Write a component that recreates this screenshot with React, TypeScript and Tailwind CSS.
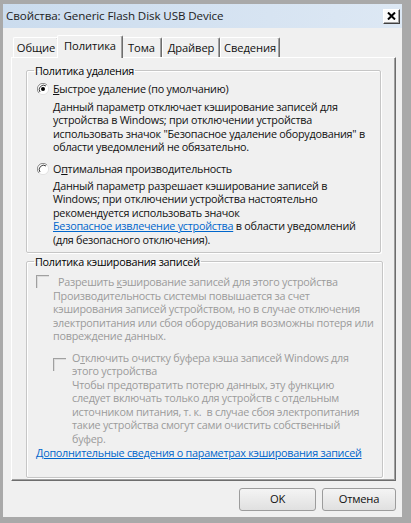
import type { ReactNode } from 'react';

function Radio({ checked }: { checked?: boolean }) {
  return (
    <svg width="12" height="12" viewBox="0 0 12 12" className="shrink-0">
      <circle cx="6" cy="6" r="5.5" fill="#fff" />
      <path d="M10 2 A5.5 5.5 0 0 0 2 10" fill="none" stroke="#8a8a8a" strokeWidth="1" />
      <path d="M9 3 A4.3 4.3 0 0 0 3 9" fill="none" stroke="#3c3c3c" strokeWidth="1" />
      <path d="M2 10 A5.5 5.5 0 0 0 10 2" fill="none" stroke="#e2e2e2" strokeWidth="1" />
      {checked && <circle cx="6" cy="6" r="2" fill="#000" />}
    </svg>
  );
}

function DisabledCheck() {
  return (
    <span className="block w-[13px] h-[13px] shrink-0 bg-[#f0f0f0] border-t border-l border-[#a0a0a0] border-r-white border-b-white shadow-[inset_1px_1px_0_#dcdcdc]" />
  );
}

function GroupBox({ title, children }: { title: string; children: ReactNode }) {
  return (
    <fieldset className="border border-[#c6c6c6] rounded-[2px] shadow-[1px_1px_0_#fff,inset_1px_1px_0_#fff]">
      <legend className="ml-[7px] px-[1px] leading-[13.5px] text-black">{title}</legend>
      {children}
    </fieldset>
  );
}

const tabs = ['Общие', 'Политика', 'Тома', 'Драйвер', 'Сведения'];
const tabW = ['w-[46px]', 'w-[66px]', 'w-[41px]', 'w-[58px]', 'w-[60px]'];

export default function App() {
  return (
    <div className="w-[411px] h-[523px] overflow-hidden whitespace-nowrap bg-[#a9a9a9] pt-[4px] pl-[3px] pr-[9px] pb-[6px] font-['Open_Sans',sans-serif] text-[10.8px] tracking-[-0.25px] text-[#111]">
      <div className="h-full flex flex-col bg-[#f0f0f0]">
        {/* title bar */}
        <div className="h-[24px] flex items-center justify-between pl-[3px] pr-[2px] bg-gradient-to-r from-[#cbdcee] to-[#dde8f4]">
          <span className="text-[11.6px] text-[#222] tracking-[-0.1px]">Свойства: Generic Flash Disk USB Device</span>
          <button className="w-[17px] h-[15px] flex items-center justify-center bg-[#fafafa] border border-[#fff] border-r-[#404040] border-b-[#404040] shadow-[inset_-1px_-1px_0_#a0a0a0]">
            <svg width="9" height="8" viewBox="0 0 9 8">
              <path d="M1 0.5 L8 7.5 M8 0.5 L1 7.5" stroke="#000" strokeWidth="2" />
            </svg>
          </button>
        </div>

        <div className="flex-1 flex flex-col pl-[8px] pr-[6px]">
          {/* tabs */}
          <div className="flex items-end h-[29px] pl-[2px] text-[11.2px] tracking-[-0.1px]">
            {tabs.map((t, i) =>
              i === 1 ? (
                <div
                  key={t}
                  className={tabW[i] + ' -mx-[2px] relative z-10 h-[23px] -mb-[1px] bg-[#f0f0f0] border-t border-l border-white border-r border-r-[#6d6d6d] rounded-t-[2px] shadow-[inset_-1px_0_0_#a0a0a0] flex items-start justify-center pt-[2px]'}
                >
                  {t}
                </div>
              ) : (
                <div
                  key={t}
                  className={tabW[i] + ' h-[20px] border-t border-l border-white border-r border-r-[#6d6d6d] rounded-t-[2px] shadow-[inset_-1px_0_0_#a0a0a0] flex items-start justify-center pt-[2px]'}
                >
                  {t}
                </div>
              )
            )}
          </div>

          {/* panel */}
          <div className="h-[424px] border border-white border-r-[#6d6d6d] border-b-[#6d6d6d] shadow-[inset_-1px_-1px_0_#a0a0a0] px-[14px] pt-[6px] flex flex-col gap-[2px]">
            <GroupBox title="Политика удаления">
              <div className="pl-[10px] pr-[8px] pb-[6px]">
                <div className="flex items-center gap-[4px] mt-[4px] h-[14px]">
                  <Radio checked />
                  <span className="leading-[13.5px]">
                    <span className="underline">Б</span>ыстрое удаление (по умолчанию)
                  </span>
                </div>
                <p className="pl-[16px] mt-[4px] leading-[13.5px]">
                  Данный параметр отключает кэширование записей для<br />
                  устройства в Windows; при отключении устройства<br />
                  использовать значок "Безопасное удаление оборудования" в<br />
                  области уведомлений не обязательно.
                </p>
                <div className="flex items-center gap-[4px] mt-[8px] h-[14px]">
                  <Radio />
                  <span className="leading-[13.5px]">
                    О<span className="underline">п</span>тимальная производительность
                  </span>
                </div>
                <p className="pl-[16px] mt-[3px] leading-[13.5px]">
                  Данный параметр разрешает кэширование записей в<br />
                  Windows; при отключении устройства настоятельно<br />
                  рекомендуется использовать значок<br />
                  <span className="text-[#0066cc] underline">Безопасное извлечение устройства</span> в области уведомлений<br />
                  (для безопасного отключения).
                </p>
              </div>
            </GroupBox>

            <GroupBox title="Политика кэширования записей">
              <div className="pl-[9px] pr-[8px] pb-[17px] text-[#9b9b9b]">
                <div className="flex items-center gap-[9px] mt-[6px] h-[14px]">
                  <DisabledCheck />
                  <span className="leading-[13.5px]">
                    Разрешить <span className="underline">к</span>эширование записей для этого устройства
                  </span>
                </div>
                <p className="pl-[17px] leading-[13.5px]">
                  Производительность системы повышается за счет<br />
                  кэширования записей устройством, но в случае отключения<br />
                  электропитания или сбоя оборудования возможны потеря или<br />
                  повреждение данных.
                </p>
                <div className="flex items-center gap-[6px] mt-[8px] pl-[17px]">
                  <DisabledCheck />
                  <span className="leading-[13.5px]">
                    О<span className="underline">т</span>ключить очистку буфера кэша записей Windows для<br />
                    этого устройства
                  </span>
                </div>
                <p className="pl-[36px] leading-[13.5px]">
                  Чтобы предотвратить потерю данных, эту функцию<br />
                  следует включать только для устройств с отдельным<br />
                  источником питания, т. к.&nbsp; в случае сбоя электропитания<br />
                  такие устройства смогут сами очистить собственный<br />
                  буфер.
                </p>
                <div className="mt-[1px] leading-[13.5px] text-[#0066cc] underline">
                  Дополнительные сведения о параметрах кэширования записей
                </div>
              </div>
            </GroupBox>
          </div>

          {/* buttons */}
          <div className="flex justify-end gap-[6px] mt-[7px]">
            <button className="w-[77px] h-[23px] rounded-[3px] border border-[#9c9c9c] bg-gradient-to-b from-[#f4f4f4] to-[#e0e0e0] text-[11.2px] text-[#111]">
              OK
            </button>
            <button className="w-[74px] h-[23px] rounded-[3px] border border-[#9c9c9c] bg-gradient-to-b from-[#f4f4f4] to-[#e0e0e0] text-[11.2px] text-[#111]">
              Отмена
            </button>
          </div>
        </div>
      </div>
    </div>
  );
}
